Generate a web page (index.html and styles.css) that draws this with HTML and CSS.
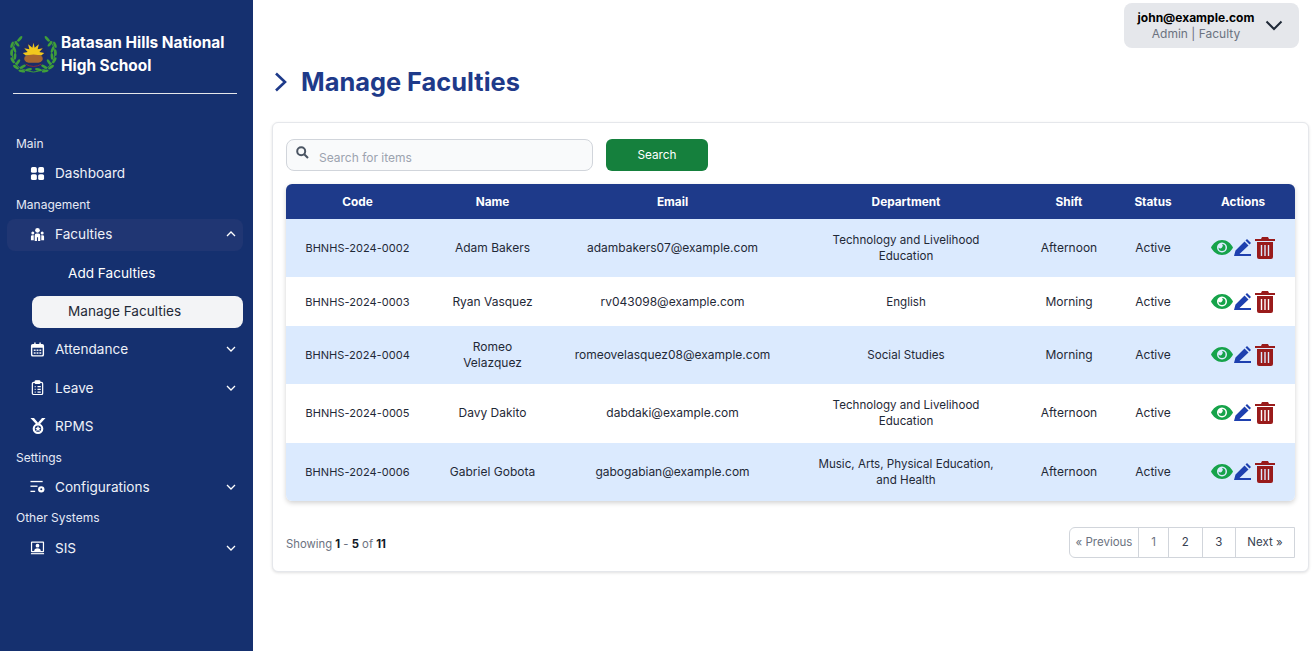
FILE: index.html
```html
<!DOCTYPE html>
<html lang="en">
<head>
  <meta charset="UTF-8">
  <title>Manage Faculties</title>
  <link rel="stylesheet" href="styles.css">
</head>
<body>

<!-- Sidebar -->
<aside class="sidebar">
  <div class="brand">
    <svg class="brand-logo" viewBox="0 0 48 38">
      <g id="wreath" fill="#3f9e3a">
        <path d="M9 3 C1 10 0 22 6 29 C10 34 17 36 24 37" fill="none" stroke="#3f9e3a" stroke-width="1"/>
        <ellipse cx="10" cy="3" rx="3.500" ry="1.400" transform="rotate(-50 10 3)"/>
        <ellipse cx="7" cy="8" rx="3.500" ry="1.400" transform="rotate(50 7 8)"/>
        <ellipse cx="2" cy="9" rx="3.500" ry="1.400" transform="rotate(-70 2 9)"/>
        <ellipse cx="4.500" cy="14" rx="3.500" ry="1.400" transform="rotate(70 4.500 14)"/>
        <ellipse cx="1.500" cy="17" rx="3.500" ry="1.400" transform="rotate(95 1.500 17)"/>
        <ellipse cx="5" cy="21" rx="3.500" ry="1.400" transform="rotate(95 5 21)"/>
        <ellipse cx="2.500" cy="25" rx="3.500" ry="1.400" transform="rotate(60 2.500 25)"/>
        <ellipse cx="8" cy="27" rx="3.500" ry="1.400" transform="rotate(125 8 27)"/>
        <ellipse cx="6" cy="32" rx="3.500" ry="1.400" transform="rotate(35 6 32)"/>
        <ellipse cx="13" cy="31.500" rx="3.500" ry="1.400" transform="rotate(150 13 31.500)"/>
        <ellipse cx="12" cy="36" rx="3.500" ry="1.300" transform="rotate(10 12 36)"/>
        <ellipse cx="19" cy="34.500" rx="3.500" ry="1.300" transform="rotate(165 19 34.500)"/>
      </g>
      <use href="#wreath" transform="translate(48 0) scale(-1 1)"/>
      <circle cx="24" cy="18.500" r="13.500" fill="#1b2c68"/>
      <path d="M24 7 L25.200 12 L29.500 8.500 L28.300 13.500 L33.500 12.500 L30 16.500 L35 17.500 L32 20 H16 L13 17.500 L18 16.500 L14.500 12.500 L19.700 13.500 L18.500 8.500 L22.800 12Z" fill="#f2c81e"/>
      <path d="M15 21 Q24 17 33 21 Q35 26 29 27.500 H19 Q13 26 15 21Z" fill="#a8662f"/>
      <path d="M16 29 Q24 33.500 32 29" fill="none" stroke="#8e2a3a" stroke-width="1"/>
    </svg>
    <div class="brand-name">Batasan Hills National High School</div>
  </div>
  <hr class="brand-rule">

  <nav class="nav">
    <div class="nav-label">Main</div>
    <a class="nav-item">
      <svg class="nav-icon" viewBox="0 0 16 16" fill="#fff"><rect x="1" y="1" width="6.300" height="6.300" rx="1.800"/><rect x="8.700" y="1" width="6.300" height="6.300" rx="1.800"/><rect x="1" y="8.700" width="6.300" height="6.300" rx="1.800"/><rect x="8.700" y="8.700" width="6.300" height="6.300" rx="1.800"/></svg>
      <span>Dashboard</span>
    </a>

    <div class="nav-label">Management</div>
    <a class="nav-item open">
      <svg class="nav-icon" viewBox="0 0 16 16" fill="#fff"><circle cx="8" cy="3.500" r="2.500"/><circle cx="3" cy="6.500" r="1.600"/><circle cx="13" cy="6.500" r="1.600"/><path d="M5 15 V9 Q5 7 7 7 H9 Q11 7 11 9 V15 H8.600 V11 H7.400 V15Z"/><path d="M1 14 V10 Q1 8.700 2.500 8.700 H4 V14Z M15 14 V10 Q15 8.700 13.500 8.700 H12 V14Z"/></svg>
      <span>Faculties</span>
      <svg class="nav-caret" viewBox="0 0 10 6"><path d="M1 5 L5 1 L9 5"/></svg>
    </a>
    <a class="nav-sub">Add Faculties</a>
    <a class="nav-sub current">Manage Faculties</a>
    <a class="nav-item">
      <svg class="nav-icon" viewBox="0 0 16 16" fill="#fff"><path fill-rule="evenodd" d="M3 2 H4.500 V.5 H6 V2 H10 V.5 H11.500 V2 H13 Q15 2 15 4 V13.500 Q15 15.500 13 15.500 H3 Q1 15.500 1 13.500 V4 Q1 2 3 2Z M2.500 6 V13 Q2.500 14 3.500 14 H12.500 Q13.500 14 13.500 13 V6Z"/><rect x="4" y="8" width="2" height="1.500"/><rect x="7" y="8" width="2" height="1.500"/><rect x="10" y="8" width="2" height="1.500"/><rect x="4" y="11" width="2" height="1.500"/><rect x="7" y="11" width="2" height="1.500"/><rect x="10" y="11" width="2" height="1.500"/></svg>
      <span>Attendance</span>
      <svg class="nav-caret" viewBox="0 0 10 6"><path d="M1 1 L5 5 L9 1"/></svg>
    </a>
    <a class="nav-item">
      <svg class="nav-icon" viewBox="0 0 16 16" fill="none" stroke="#fff" stroke-width="1.300"><rect x="2.500" y="2.500" width="11" height="13" rx="1.500"/><rect x="5.500" y=".9" width="5" height="2.800" rx=".8" fill="#fff"/><path d="M5 7 H6 M5 10 H6 M5 13 H6 M8 7 H11.500 M8 10 H11.500 M8 13 H11.500"/></svg>
      <span>Leave</span>
      <svg class="nav-caret" viewBox="0 0 10 6"><path d="M1 1 L5 5 L9 1"/></svg>
    </a>
    <a class="nav-item">
      <svg class="nav-icon medal" viewBox="0 0 18 18" fill="#fff"><path d="M.5 0 H4.500 L9.500 6 L7.500 7.500Z M17.500 0 H13.500 L8.500 6 L10.500 7.500Z"/><circle cx="9" cy="12" r="4.800" fill="none" stroke="#fff" stroke-width="2.400"/><path d="M9 8.800 L10 11 L12.200 11.200 L10.500 12.700 L11 15 L9 13.800 L7 15 L7.500 12.700 L5.800 11.200 L8 11Z"/></svg>
      <span>RPMS</span>
    </a>

    <div class="nav-label">Settings</div>
    <a class="nav-item">
      <svg class="nav-icon" viewBox="0 0 16 16" fill="#fff"><rect x=".5" y="2" width="13" height="1.400"/><rect x=".5" y="7" width="7.500" height="1.400"/><rect x=".5" y="12.500" width="5" height="1.400"/><circle cx="12" cy="11" r="3.400"/><circle cx="12" cy="11" r="1.100" fill="#15306f"/></svg>
      <span>Configurations</span>
      <svg class="nav-caret" viewBox="0 0 10 6"><path d="M1 1 L5 5 L9 1"/></svg>
    </a>

    <div class="nav-label">Other Systems</div>
    <a class="nav-item">
      <svg class="nav-icon" viewBox="0 0 16 16" fill="#fff"><path fill-rule="evenodd" d="M2 1.500 H14 Q15 1.500 15 2.500 V12 Q15 13 14 13 H2 Q1 13 1 12 V2.500 Q1 1.500 2 1.500Z M2.300 2.800 V11.700 H13.700 V2.800Z"/><circle cx="8" cy="6" r="2"/><path d="M4.500 11.700 Q4.500 8.700 8 8.700 Q11.500 8.700 11.500 11.700Z"/><rect x="1" y="14" width="14" height="1.200"/></svg>
      <span>SIS</span>
      <svg class="nav-caret" viewBox="0 0 10 6"><path d="M1 1 L5 5 L9 1"/></svg>
    </a>
  </nav>
</aside>

<!-- Main content -->
<main class="main">
  <div class="topbar">
    <div class="user-box">
      <div class="user-info">
        <div class="user-email">john@example.com</div>
        <div class="user-role">Admin | Faculty</div>
      </div>
      <svg class="user-caret" viewBox="0 0 18 11"><path d="M1.500 1.500 L9 9 L16.500 1.500"/></svg>
    </div>
  </div>

  <div class="page-title">
    <svg class="title-chevron" viewBox="0 0 13 20"><path d="M2 1.500 L11 10 L2 18.500"/></svg>
    <h1>Manage Faculties</h1>
  </div>

  <section class="card">
    <div class="search-row">
      <div class="search-box">
        <svg class="search-icon" viewBox="0 0 13 13"><circle cx="5.200" cy="5.200" r="4"/><path d="M8.200 8.200 L12 12"/></svg>
        <span class="search-text">Search for items</span>
      </div>
      <button class="search-btn">Search</button>
    </div>

    <table class="faculty-table">
      <colgroup>
        <col class="c-code"><col class="c-name"><col class="c-email"><col class="c-dept"><col class="c-shift"><col class="c-status"><col class="c-actions">
      </colgroup>
      <thead>
        <tr><th>Code</th><th>Name</th><th>Email</th><th>Department</th><th>Shift</th><th>Status</th><th>Actions</th></tr>
      </thead>
      <tbody id="faculty-rows"></tbody>
    </table>

    <div class="table-foot">
      <div class="showing">Showing <b>1</b> - <b>5</b> of <b>11</b></div>
      <div class="pager">
        <a class="pg prev">« Previous</a>
        <a class="pg num muted">1</a>
        <a class="pg num two">2</a>
        <a class="pg num two">3</a>
        <a class="pg next">Next »</a>
      </div>
    </div>
  </section>
</main>

<script>
  const faculties = [
    ["BHNHS-2024-0002", "Adam Bakers", "adambakers07@example.com", "Technology and Livelihood Education", "Afternoon"],
    ["BHNHS-2024-0003", "Ryan Vasquez", "rv043098@example.com", "English", "Morning"],
    ["BHNHS-2024-0004", "Romeo Velazquez", "romeovelasquez08@example.com", "Social Studies", "Morning"],
    ["BHNHS-2024-0005", "Davy Dakito", "dabdaki@example.com", "Technology and Livelihood Education", "Afternoon"],
    ["BHNHS-2024-0006", "Gabriel Gobota", "gabogabian@example.com", "Music, Arts, Physical Education, and Health", "Afternoon"]
  ];

  const actionIcons = `
    <div class="actions">
      <svg class="ic-eye" viewBox="0 0 22 15"><path fill-rule="evenodd" d="M11 0 C16 0 20 3.500 22 7.500 C20 11.500 16 15 11 15 C6 15 2 11.500 0 7.500 C2 3.500 6 0 11 0Z M11 2.500 A5 5 0 1 0 11.010 2.500Z"/><path d="M11 4 A3.500 3.500 0 1 1 7.500 7.500 A2.200 2.200 0 0 0 11 4Z"/></svg>
      <svg class="ic-pen" viewBox="0 0 17 17"><path d="M0 17 L1.500 11.500 L10.500 2.500 L14.500 6.500 L5.500 15 H17 V17Z"/><path d="M11.500 1.500 L13 0 L17 4 L15.500 5.500Z"/></svg>
      <svg class="ic-trash" viewBox="0 0 20 22"><path d="M7 0 H13 L14 2 H20 V4 H0 V2 H6Z"/><path fill-rule="evenodd" d="M2 5 H18 V20 Q18 22 16 22 H4 Q2 22 2 20Z M5.800 8 V19 H7.200 V8Z M9.300 8 V19 H10.700 V8Z M12.800 8 V19 H14.200 V8Z"/></svg>
    </div>`;

  const tbody = document.getElementById("faculty-rows");
  faculties.forEach((f) => {
    const tr = document.createElement("tr");
    tr.innerHTML = `
      <td class="code-cell">${f[0]}</td>
      <td class="name-cell">${f[1]}</td>
      <td>${f[2]}</td>
      <td class="dept-cell">${f[3]}</td>
      <td>${f[4]}</td>
      <td>Active</td>
      <td>${actionIcons}</td>
    `;
    tbody.appendChild(tr);
  });
</script>

</body>
</html>
```

FILE: styles.css
```css
* {
  box-sizing: border-box;
}
body {
  font-family: Inter, "Open Sans", sans-serif;
  margin: 0;
  height: 651px;
  overflow: hidden;
  display: flex;
  background: #fff;
  color: #1f2937;
}

/* Sidebar */
.sidebar {
  width: 253px;
  height: 651px;
  flex-shrink: 0;
  background: #15306f;
  color: #fff;
  padding: 35px 10px 0 10px;
}
.brand {
  display: flex;
  align-items: center;
  height: 38px;
  gap: 4px;
}
.brand-logo {
  width: 47px;
  height: 37px;
  flex-shrink: 0;
}
.brand-name {
  font-size: 15.4px;
  font-weight: 700;
  line-height: 23px;
  width: 180px;
}
.brand-rule {
  border: none;
  border-top: 1px solid #e5e7eb;
  margin: 20px 6px 42px 3px;
}
.nav {
  display: flex;
  flex-direction: column;
  gap: 6.4px;
}
.nav-label {
  font-size: 12px;
  line-height: 16px;
  padding-left: 6px;
  color: #e5e9f5;
}
.nav-item {
  display: flex;
  align-items: center;
  height: 32px;
  margin-left: -3px;
  padding: 0 7px 2px 23px;
  border-radius: 8px;
  font-size: 13.6px;
  color: #eef1f8;
}
.nav-item.open {
  background: #203673;
}
.nav-icon {
  width: 15px;
  height: 15px;
  margin-right: 10px;
  flex-shrink: 0;
}
.nav-icon.medal {
  width: 16px;
  height: 16px;
  margin-right: 9px;
}
.nav-caret {
  width: 10px;
  height: 6px;
  margin-left: auto;
  fill: none;
  stroke: #fff;
  stroke-width: 1.300;
}
.nav-sub {
  display: flex;
  align-items: center;
  height: 32px;
  margin-left: 22px;
  padding: 0 0 2px 36px;
  border-radius: 8px;
  font-size: 13.6px;
}
.nav-sub.current {
  background: #f3f4f6;
  color: #1f2937;
}

/* Main */
.main {
  flex: 1;
  min-width: 0;
  padding: 3px 5px 0 19px;
}
.topbar {
  display: flex;
  justify-content: flex-end;
  padding-right: 10px;
}
.user-box {
  display: flex;
  align-items: center;
  width: 175px;
  height: 45px;
  padding: 0 16px 0 13px;
  background: #e5e7eb;
  border-radius: 8px;
}
.user-info {
  text-align: center;
  flex: 1;
  margin-right: 10px;
}
.user-email {
  font-size: 12px;
  font-weight: 700;
  line-height: 16px;
  color: #000;
  white-space: nowrap;
}
.user-role {
  font-size: 12px;
  line-height: 16px;
  color: #6b7280;
}
.user-caret {
  width: 18px;
  height: 11px;
  fill: none;
  stroke: #1f2937;
  stroke-width: 2;
}
.page-title {
  display: flex;
  align-items: center;
  height: 34px;
  margin-top: 17px;
  padding-left: 2px;
}
.title-chevron {
  width: 13px;
  height: 20px;
  fill: none;
  stroke: #1e3a8a;
  stroke-width: 2.600;
}
.page-title h1 {
  margin: -2px 0 0 14px;
  font-size: 25.4px;
  font-weight: 700;
  color: #1e3a8a;
}
.card {
  height: 450px;
  margin-top: 23px;
  padding: 16px 13px 0 13px;
  background: #fff;
  border: 1px solid #e5e7eb;
  border-radius: 6px;
  box-shadow: 0 1px 3px rgba(0, 0, 0, 0.12);
}
.search-row {
  display: flex;
  gap: 13px;
  margin-bottom: 13px;
}
.search-box {
  display: flex;
  align-items: center;
  width: 307px;
  height: 32px;
  padding-left: 9px;
  background: #f9fafb;
  border: 1px solid #d1d5db;
  border-radius: 8px;
}
.search-icon {
  width: 13px;
  height: 13px;
  margin: -5px 10px 0 0;
  fill: none;
  stroke: #4b5563;
  stroke-width: 2;
}
.search-text {
  font-size: 12px;
  margin-top: 5px;
  color: #9ca3af;
}
.search-btn {
  width: 102px;
  height: 32px;
  border: none;
  border-radius: 6px;
  background: #15803d;
  color: #fff;
  font-family: inherit;
  font-size: 11.8px;
}

/* Table */
.faculty-table {
  width: 1009px;
  table-layout: fixed;
  border-collapse: separate;
  border-spacing: 0;
  font-size: 12px;
  text-align: center;
  border-radius: 6px;
  box-shadow: 0 2px 5px rgba(0, 0, 0, 0.18);
}
.c-code { width: 143px; }
.c-name { width: 127px; }
.c-email { width: 233px; }
.c-dept { width: 234px; }
.c-shift { width: 92px; }
.c-status { width: 76px; }
.c-actions { width: 104px; }
.faculty-table th {
  height: 35px;
  padding: 0;
  background: #1e3a8a;
  color: #fff;
  font-size: 11.8px;
  font-weight: 700;
}
.faculty-table th:first-child { border-top-left-radius: 6px; }
.faculty-table th:last-child { border-top-right-radius: 6px; }
.faculty-table td {
  padding: 13.2px 0;
  line-height: 16px;
  color: #1f2937;
}
.faculty-table td.code-cell {
  font-size: 11px;
  letter-spacing: 0.05px;
}
.faculty-table td.name-cell {
  padding-left: 18px;
  padding-right: 18px;
}
.faculty-table td.dept-cell {
  padding-left: 24px;
  padding-right: 24px;
  font-size: 11.6px;
}
.faculty-table tbody tr:nth-child(odd) td {
  background: #dbeafe;
}
.faculty-table tbody tr:last-child td:first-child { border-bottom-left-radius: 6px; }
.faculty-table tbody tr:last-child td:last-child { border-bottom-right-radius: 6px; }
.actions {
  display: flex;
  justify-content: center;
  align-items: center;
  height: 22px;
}
.ic-eye {
  width: 22px;
  height: 15px;
  margin-top: -1px;
  fill: #16a34a;
}
.ic-pen {
  width: 17px;
  height: 17px;
  margin: -1px 4px 0 1px;
  fill: #1e40af;
}
.ic-trash {
  width: 20px;
  height: 22px;
  fill: #991b1b;
}

/* Footer */
.table-foot {
  display: flex;
  justify-content: space-between;
  align-items: center;
  margin-top: 26px;
}
.showing {
  font-size: 11.3px;
  margin-top: 3px;
  color: #6b7280;
}
.showing b {
  color: #111827;
}
.pager {
  display: flex;
  height: 31px;
  font-size: 11.500px;
  border: 1px solid #d1d5db;
  border-radius: 6px 0 0 6px;
}
.pg {
  display: flex;
  align-items: center;
  justify-content: center;
  border-left: 1px solid #d1d5db;
  color: #374151;
}
.pg.prev {
  width: 68px;
  border-left: none;
  color: #6b7280;
}
.pg.num { width: 30px; }
.pg.two { width: 33.500px; }
.pg.muted { color: #6b7280; }
.pg.next { width: 59px; }
```
